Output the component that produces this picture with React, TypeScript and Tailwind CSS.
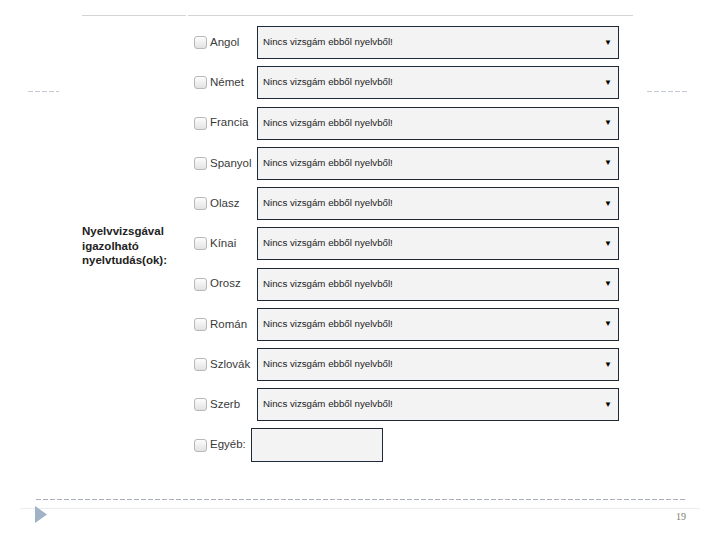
const languages = [
  'Angol',
  'Német',
  'Francia',
  'Spanyol',
  'Olasz',
  'Kínai',
  'Orosz',
  'Román',
  'Szlovák',
  'Szerb',
];

const Checkbox = () => (
  <div className="w-[13px] h-[13px] shrink-0 rounded-[3px] border border-[#b8b8b8] bg-[linear-gradient(#fdfdfd,#e2e2e2)]" />
);

const Dashes = ({ className }: { className: string }) => (
  <div
    className={`absolute h-px bg-[repeating-linear-gradient(90deg,#c4cad1_0_5px,transparent_5px_7px)] ${className}`}
  />
);

export default function App() {
  return (
    <div className="relative w-[720px] h-[540px] bg-white overflow-hidden flex flex-col font-['Liberation_Sans',Arial,sans-serif] text-[#3a3a3a]">
      <Dashes className="left-[28px] top-[91px] w-[31px]" />
      <Dashes className="left-[647px] top-[91px] w-[41px]" />

      {/* top rule */}
      <div className="mt-[15px] ml-[82px] w-[551px] h-px flex gap-[2px]">
        <div className="w-[104px] bg-[#d4d4d4]" />
        <div className="flex-1 bg-[#d4d4d4]" />
      </div>

      <div className="mt-[10px] pl-[82px] flex items-center">
        <div className="w-[112px] pt-[4px] text-[11.5px] leading-[14.5px] font-bold text-[#222]">
          Nyelvvizsgával
          <br />
          igazolható
          <br />
          nyelvtudás(ok):
        </div>

        <div className="flex flex-col gap-[7.25px]">
          {languages.map((lang) => (
            <div key={lang} className="h-[33px] flex items-center">
              <Checkbox />
              <span className="ml-[3px] w-[47px] text-[11.5px]">{lang}</span>
              <div className="w-[362px] h-[33px] border border-[#1e2a38] bg-[#f3f3f3] flex items-center justify-between pl-[5px] pr-[6px]">
                <span className="text-[9.7px] text-[#222]">Nincs vizsgám ebből nyelvből!</span>
                <span className="text-[8px] text-black">▼</span>
              </div>
            </div>
          ))}
          <div className="h-[33px] flex items-center">
            <Checkbox />
            <span className="ml-[3px] w-[41px] text-[11.5px]">Egyéb:</span>
            <div className="w-[132px] h-[34px] border border-[#1e2a38] bg-[#f3f3f3]" />
          </div>
        </div>
      </div>

      {/* footer */}
      <div className="mt-auto pb-[17px]">
        <div className="ml-[36px] w-[650px] h-px bg-[repeating-linear-gradient(90deg,#a9b0ba_0_5px,transparent_5px_7px)]" />
        <div className="mt-[8px] ml-[20px] w-[680px] h-px bg-[#ececec]" />
        <div className="-mt-[3px] h-[17px] flex items-center justify-between pl-[35px] pr-[34px]">
          <svg width="12" height="17" viewBox="0 0 12 17">
            <polygon points="0,0 12,8.5 0,17" fill="#9fb2c6" />
          </svg>
          <span className="mt-[4px] text-[10px] font-['Liberation_Serif',serif] text-[#7d7d6a]">19</span>
        </div>
      </div>
    </div>
  );
}
